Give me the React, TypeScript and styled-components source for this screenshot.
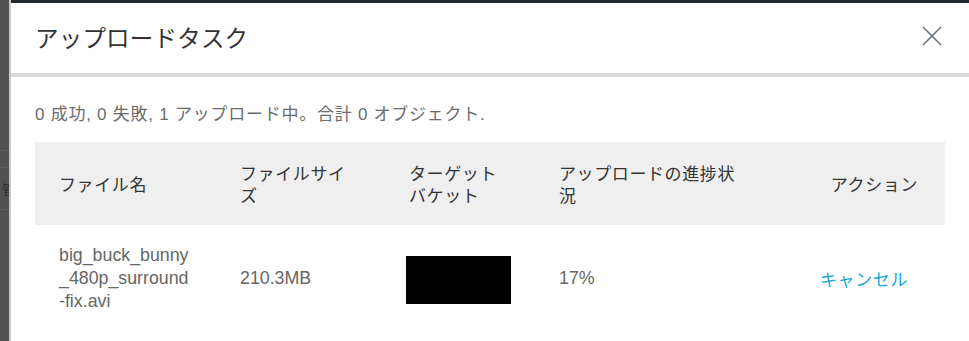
import React from "react";
import styled, { createGlobalStyle } from "styled-components";

const Global = createGlobalStyle`
  html, body { margin: 0; padding: 0; background: #fff; }
  body { font-family: "Liberation Sans", "Noto Sans CJK JP", sans-serif; }
`;

const Page = styled.div`
  display: flex;
  width: 969px;
  height: 341px;
  overflow: hidden;
`;

const Rail = styled.div`
  width: 9px;
  flex: none;
  background: #515151;
  border-right: 2px solid #c9c9c9;
  display: flex;
  flex-direction: column;
  overflow: hidden;
`;

const RailSegment = styled.div<{ $h: number }>`
  height: ${(p) => p.$h}px;
  flex: none;
  border-bottom: 1px solid #5c5c5c;
  color: #2e2e2e;
  font-size: 13px;
  line-height: 1;
  display: flex;
  align-items: center;
  justify-content: flex-end;
  overflow: hidden;
`;

const RailGlyph = styled.span`
  margin-right: -6px;
  font-family: "Noto Sans CJK JP", sans-serif;
`;

const Main = styled.div`
  flex: 1;
  display: flex;
  flex-direction: column;
  border-top: 3px solid #22282e;
  min-width: 0;
`;

const Header = styled.div`
  height: 70px;
  flex: none;
  display: flex;
  align-items: center;
  justify-content: space-between;
  padding: 0 27px 0 24px;
  border-bottom: 4px solid #d8d8d8;
`;

const Title = styled.h1`
  margin: 0;
  font-size: 23.5px;
  font-weight: 400;
  letter-spacing: 0.2px;
  color: #333;
  font-family: "Noto Sans CJK JP", sans-serif;
  line-height: 1;
  margin-top: -1px;
`;

const CloseButton = styled.button`
  border: 0;
  background: none;
  padding: 0;
  width: 20px;
  height: 20px;
  display: flex;
  align-items: center;
  justify-content: center;
  color: #6a737d;
  cursor: pointer;
  margin-top: -5px;
`;

const Body = styled.div`
  padding: 26px 24px 0 24px;
  display: flex;
  flex-direction: column;
`;

const Summary = styled.p`
  margin: 0 0 16px 0;
  font-size: 17px;
  line-height: 23px;
  color: #6b6b6b;
  letter-spacing: 0.75px;
`;

const Table = styled.div`
  display: grid;
  grid-template-columns: 181px 169px 150px 233px 177px;
`;

const HeadCell = styled.div<{ $align?: "left" | "right" }>`
  background: #efefef;
  height: 83px;
  box-sizing: border-box;
  display: flex;
  align-items: center;
  justify-content: ${(p) => (p.$align === "right" ? "flex-end" : "flex-start")};
  padding: 0 ${(p) => (p.$align === "right" ? "27px" : "24px")} 0 24px;
  font-size: 17px;
  letter-spacing: 0.6px;
  line-height: 22px;
  color: #333;
  font-family: "Noto Sans CJK JP", sans-serif;
`;

const Cell = styled.div<{ $align?: "left" | "right" }>`
  box-sizing: border-box;
  min-height: 106px;
  display: flex;
  align-items: center;
  justify-content: ${(p) => (p.$align === "right" ? "flex-end" : "flex-start")};
  padding: 18px ${(p) => (p.$align === "right" ? "37px" : "24px")} 18px 24px;
  font-size: 17.8px;
  line-height: 23px;
  color: #666;
`;

const FileName = styled.span`
  white-space: nowrap;
`;

const Redacted = styled.div`
  width: 106px;
  height: 48px;
  background: #000;
  margin-left: -3px;
  margin-top: 3px;
`;

const CancelLink = styled.a`
  color: #11a5d9;
  text-decoration: none;
  font-size: 17px;
  letter-spacing: 0.6px;
  font-family: "Noto Sans CJK JP", sans-serif;
  cursor: pointer;
`;

export default function App() {
  return (
    <>
      <Global />
      <Page>
        <Rail>
          <RailSegment $h={150} />
          <RailSegment $h={16} />
          <RailSegment $h={41}>
            <RailGlyph>管</RailGlyph>
          </RailSegment>
          <RailSegment $h={134} />
        </Rail>
        <Main>
          <Header>
            <Title>アップロードタスク</Title>
            <CloseButton aria-label="close">
              <svg width="20" height="20" viewBox="0 0 20 20">
                <path d="M1 1 L19 19 M19 1 L1 19" stroke="currentColor" strokeWidth="1.6" fill="none" />
              </svg>
            </CloseButton>
          </Header>
          <Body>
            <Summary>0 成功, 0 失敗, 1 アップロード中。合計 0 オブジェクト.</Summary>
            <Table>
              <HeadCell>ファイル名</HeadCell>
              <HeadCell>ファイルサイズ</HeadCell>
              <HeadCell>ターゲットバケット</HeadCell>
              <HeadCell>アップロードの進捗状況</HeadCell>
              <HeadCell $align="right">アクション</HeadCell>
              <Cell>
                <FileName>
                  big_buck_bunny
                  <br />
                  _480p_surround
                  <br />
                  -fix.avi
                </FileName>
              </Cell>
              <Cell>210.3MB</Cell>
              <Cell>
                <Redacted />
              </Cell>
              <Cell>17%</Cell>
              <Cell $align="right">
                <CancelLink>キャンセル</CancelLink>
              </Cell>
            </Table>
          </Body>
        </Main>
      </Page>
    </>
  );
}
